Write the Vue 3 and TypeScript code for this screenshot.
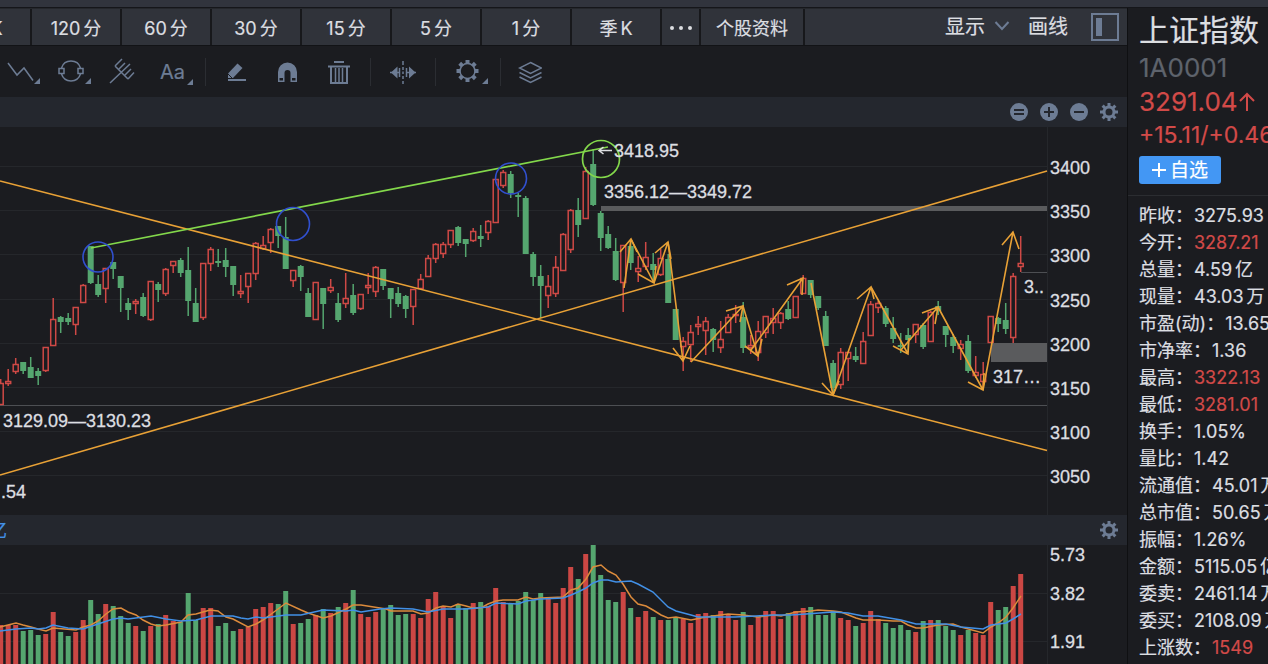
<script setup lang="ts">
type Candle = { x: number; up: boolean; high: number; top: number; bottom: number; low: number; volume: number }
type Quote = { label: string; value: string; unit?: string; up?: boolean }

const periods: [string, string][] = [
  ['月', 'K'], ['120', '分'], ['60', '分'], ['30', '分'], ['15', '分'], ['5', '分'], ['1', '分'], ['季', 'K'],
]

const quotes: Quote[] = [
  { label: '昨收', value: '3275.93' },
  { label: '今开', value: '3287.21', up: true },
  { label: '总量', value: '4.59', unit: '亿' },
  { label: '现量', value: '43.03', unit: '万' },
  { label: '市盈(动)', value: '13.65' },
  { label: '市净率', value: '1.36' },
  { label: '最高', value: '3322.13', up: true },
  { label: '最低', value: '3281.01', up: true },
  { label: '换手', value: '1.05%' },
  { label: '量比', value: '1.42' },
  { label: '流通值', value: '45.01', unit: '万亿' },
  { label: '总市值', value: '50.65', unit: '万亿' },
  { label: '振幅', value: '1.26%' },
  { label: '金额', value: '5115.05', unit: '亿' },
  { label: '委卖', value: '2461.14', unit: '万' },
  { label: '委买', value: '2108.09', unit: '万' },
  { label: '上涨数', value: '1549', up: true },
]

// direction, high, body top, body bottom, low
const series = `
r 379 383 404 405|r 369 381 383 386|r 358 364 371 374|g 362 362 371 374|g 357 367 378 378|g 368 371 376 385
r 347 347 370 372|r 298 319 345 345|g 316 317 322 333|g 313 318 322 325|r 307 307 324 335|r 284 285 302 302
g 246 246 283 284|g 275 284 295 297|r 268 268 288 303|g 262 262 269 279|g 276 276 288 312|g 298 303 310 320
r 299 301 303 314|g 293 297 316 317|r 281 281 319 321|g 282 284 290 302|r 268 269 293 296|r 261 261 265 273
g 258 260 273 277|g 247 270 301 316|g 288 303 322 322|r 263 263 317 320|r 247 249 263 271|g 249 261 263 267
g 248 260 267 277|g 266 266 285 296|r 275 291 293 298|r 273 273 286 303|r 242 243 273 280|r 236 245 248 250
r 228 229 242 253|g 226 226 236 248|g 217 237 269 269|r 270 270 280 287|g 265 266 277 291|g 288 293 317 317
r 282 282 319 319|g 288 288 304 329|r 279 287 290 293|g 293 303 320 322|r 273 298 303 308|g 284 295 313 315
r 294 294 308 310|r 273 285 287 294|r 266 267 291 297|g 269 269 286 290|g 288 288 299 318|g 287 293 304 307
g 295 296 309 318|r 289 289 306 325|r 274 279 288 289|r 255 258 276 276|r 243 244 258 263|r 242 244 253 258
r 230 230 244 248|g 226 227 243 246|g 239 239 244 257|r 228 231 240 242|g 225 236 239 247|r 220 221 232 240
r 179 179 222 223|r 170 172 185 188|g 171 174 193 198|g 193 195 197 217|g 196 198 254 254|g 252 254 277 286
g 265 276 286 318|r 275 286 295 308|r 256 267 293 297|r 233 234 270 271|r 209 210 249 253|g 198 210 225 237
r 167 171 218 219|g 149 164 205 206|g 211 213 238 251|g 226 234 248 249|g 238 251 280 281|r 245 245 282 312
g 240 246 263 270|r 256 268 271 282|r 242 257 266 270|g 253 264 270 283|r 249 258 274 276|g 254 259 303 303
g 309 309 340 340|r 337 341 346 371|r 325 332 344 362|r 316 324 326 335|r 317 321 330 355|g 328 329 340 352
r 321 339 347 353|r 314 317 332 333|r 305 314 315 323|g 302 317 348 353|r 335 345 347 354|r 321 331 352 361
r 316 316 332 338|r 308 318 322 334|r 312 313 322 329|g 301 309 319 320|r 296 296 317 317|r 275 278 293 294
g 280 280 295 298|g 296 296 308 310|g 311 316 346 346|g 360 363 388 395|r 348 352 384 389|r 352 352 358 381
g 347 356 360 362|r 332 341 363 363|r 301 304 335 336|r 301 303 307 313|g 306 308 324 327|g 317 328 339 343
g 333 345 347 353|g 328 335 340 352|r 324 324 334 343|g 323 325 347 349|r 311 312 341 341|g 301 306 311 315
g 326 326 335 347|g 334 337 346 353|r 340 344 348 360|g 335 341 371 373|r 356 372 375 378|r 362 374 381 388
r 316 316 342 343|g 317 318 324 332|g 303 320 329 334|r 273 276 337 343|r 236 263 266 272`

const volumes = [
  625, 625, 625, 631, 630, 635, 634, 612, 632, 636, 632, 620, 600, 614, 604, 606, 616, 623, 626, 631,
  626, 624, 615, 621, 622, 593, 620, 608, 608, 626, 623, 631, 629, 627, 609, 607, 603, 604, 591, 624,
  623, 619, 615, 609, 613, 607, 603, 590, 614, 617, 612, 608, 605, 615, 614, 614, 618, 599, 592, 607,
  618, 604, 608, 603, 602, 606, 588, 602, 603, 601, 592, 600, 593, 599, 603, 588, 567, 579, 554, 545,
  575, 600, 602, 592, 608, 617, 611, 617, 620, 620, 617, 619, 623, 614, 613, 615, 611, 615, 620, 612,
  625, 617, 611, 611, 619, 613, 611, 608, 607, 615, 615, 611, 618, 620, 626, 623, 611, 619, 623, 628,
  625, 630, 632, 621, 620, 620, 626, 630, 635, 630, 633, 635, 602, 610, 607, 586, 574,
]

const candles: Candle[] = series.trim().split(/[|\n]/).map((row, i) => {
  const [dir, high, top, bottom, low] = row.split(' ')
  return { x: 0.7 + i * 7.5, up: dir === 'r', high: +high, top: +top, bottom: +bottom, low: +low, volume: volumes[i] }
})

const prices = [3400, 3350, 3300, 3250, 3200, 3150, 3100, 3050].map((price, i) => ({ price, y: Math.round(167 + i * 44.2) }))

// start, tip, and the two barbs of each arrow
const arrows = [
  [624, 288, 631, 239, 620, 252, 637, 252],
  [631, 239, 654, 283, 638, 274, 656, 266],
  [654, 283, 668, 242, 655, 253, 671, 259],
  [668, 242, 683, 361, 673, 348, 690, 346],
  [691, 362, 743, 306, 726, 311, 740, 322],
  [743, 306, 758, 356, 745, 346, 762, 339],
  [751, 350, 803, 278, 787, 285, 802, 295],
  [811, 283, 833, 395, 822, 383, 839, 381],
  [833, 395, 871, 287, 857, 299, 874, 299],
  [871, 287, 908, 354, 893, 346, 909, 338],
  [901, 350, 938, 307, 922, 313, 935, 324],
  [938, 307, 983, 390, 968, 382, 984, 373],
  [983, 390, 1013, 232, 1002, 245, 1019, 249],
]
const arrowPath = (a: number[]) => `M${a[0]} ${a[1]}L${a[2]} ${a[3]}M${a[4]} ${a[5]}L${a[2]} ${a[3]}L${a[6]} ${a[7]}`

const maShort = '0,627 8,625 16,623 23,625 31,627 38,629 46,631 53,628 76,630 83,627 91,625 98,621 106,614 113,609 121,608 128,612 136,615 143,620 151,624 158,626 166,625 181,622 188,615 196,614 203,612 210,610 218,611 226,617 233,619 248,627 256,624 263,620 278,609 286,603 301,610 308,613 323,618 331,616 346,609 353,605 361,605 380,608 386,609 391,611 413,611 421,614 428,613 436,608 443,606 451,607 458,604 466,606 473,608 481,608 488,604 496,601 503,600 518,600 526,597 533,599 541,598 563,597 571,590 578,588 586,579 593,567 601,565 608,571 616,575 623,584 631,597 638,604 646,606 653,610 661,615 668,618 676,617 691,620 706,617 728,614 743,615 758,617 773,615 781,616 796,612 811,611 818,610 833,611 841,612 856,618 863,620 878,620 893,621 901,621 908,625 916,628 923,628 938,625 953,624 961,627 983,633 991,627 998,623 1006,617 1013,608 1021,596'
const maLong = '0,631 16,629 31,628 38,629 46,628 53,625 68,628 83,629 98,624 113,619 121,618 128,619 151,616 166,619 181,621 196,620 211,616 233,616 241,618 248,619 256,617 263,618 286,615 301,615 323,610 346,611 353,610 361,612 380,609 391,608 413,609 428,612 443,609 466,609 488,607 496,603 518,604 526,601 541,599 563,598 571,595 578,592 586,588 593,583 601,580 608,580 616,582 631,581 638,584 653,592 668,607 676,611 691,615 698,617 735,617 756,616 773,615 791,615 806,614 833,612 848,613 863,616 878,616 901,620 916,624 946,624 961,627 983,629 991,625 1006,623 1013,619 1021,614'

const teeth = [0, 45, 90, 135, 180, 225, 270, 315]
</script>

<template>
  <div class="app">
    <div class="strip"></div>
    <div class="body">
      <main class="main">
        <nav class="tabs">
          <button v-for="[a, b] in periods" :key="a + b" class="tab"><span>{{ a }}</span><span>{{ b }}</span></button>
          <button class="tab more" aria-label="更多周期"><i></i><i></i><i></i></button>
          <button class="tab info">个股资料</button>
          <div class="tab-tools">
            <button class="plain show">显示
              <svg width="16" height="12" viewBox="0 0 16 12"><path d="M1.500 1L8 8L14.500 1" fill="none" stroke="#6d7c94" stroke-width="2" /></svg>
            </button>
            <button class="plain">画线</button>
            <button class="plain layout" aria-label="侧栏">
              <svg width="28" height="28" viewBox="0 0 28 28"><rect x="1" y="1" width="26" height="26" fill="none" stroke="#6d7c94" stroke-width="2" /><rect x="5" y="5" width="6" height="18" fill="#6d7c94" /></svg>
            </button>
          </div>
        </nav>

        <div class="toolbar">
          <div class="group first">
            <button class="plain" aria-label="折线">
              <svg width="34" height="28" viewBox="7 59 34 28"><path class="ln" d="M8 64L17 76L24 69L33 81.500" /><path class="fl" d="M40 79V85H34Z" /></svg>
            </button>
            <button class="plain" aria-label="圆形">
              <svg width="34" height="28" viewBox="58 59 34 28"><path class="ln" d="M61.500 69A10 10 0 0 1 80.500 69M61.500 75A10 10 0 0 0 80.500 75M59 69.500H64V74.500H59ZM78 69.500H83V74.500H78Z" /><path class="fl" d="M91 79V85H85Z" /></svg>
            </button>
            <button class="plain" aria-label="叉线">
              <svg width="34" height="28" viewBox="109 59 34 28"><path class="ln" d="M110 84L130 65M115 67L128 80M115 67L122 60M118.500 70.500L125 64M124.500 76.500L131 70M128 80L134 73.500" /></svg>
            </button>
            <button class="plain text-tool" aria-label="文字">Aa
              <svg width="7" height="7" viewBox="0 0 7 7"><path class="fl" d="M6 0V6H0Z" /></svg>
            </button>
          </div>
          <div class="group edit">
            <button class="plain" aria-label="画笔">
              <svg width="24" height="28" viewBox="225 59 24 28"><path class="fl" d="M237.500 64.500L242.500 69L233 79H228V74.500Z" /><path d="M228 75L232 79" stroke="#1b1c20" /><path class="ln thick" d="M228 81H246" /></svg>
            </button>
            <button class="plain" aria-label="磁铁">
              <svg width="24" height="28" viewBox="276 59 24 28"><path class="fl" d="M278 83V73A9.500 9.500 0 0 1 297 73V83H290.500V74A3 3 0 0 0 284.500 74V83Z" /><path d="M279.500 79H283V81.500H279.500ZM292 79H295.500V81.500H292Z" fill="#1b1c20" /></svg>
            </button>
            <button class="plain" aria-label="删除">
              <svg width="24" height="28" viewBox="327 59 24 28"><path class="ln thick" d="M334 63H344M328 67.500H350M331 68V84H347V68" /><path class="ln" d="M335.500 69V83M339 69V83M342.500 69V83" /></svg>
            </button>
          </div>
          <div class="group">
            <button class="plain" aria-label="镜像">
              <svg width="26" height="28" viewBox="390 59 26 28"><path class="ln" d="M403 62V66M403 68V71M403 72.500V75M403 77V80M403 82V85M399.500 69V78M406.500 69V78M390 73.500H400M406 73.500H416" /><path class="fl" d="M391 73.500L397.500 67.500V79.500ZM415.500 73.500L409 67.500V79.500Z" /></svg>
            </button>
          </div>
          <div class="group settings">
            <button class="plain" aria-label="设置">
              <svg width="34" height="28" viewBox="455 59 34 28"><circle class="ln" cx="467.500" cy="72" r="7.500" stroke-width="2" /><rect v-for="t in teeth" :key="t" class="fl" x="465.500" y="61" width="4" height="4" :transform="`rotate(${t} 467.500 72)`" /><path class="fl" d="M488 79V85H482Z" /></svg>
            </button>
          </div>
          <div class="group last">
            <button class="plain" aria-label="图层">
              <svg width="24" height="28" viewBox="518 59 24 28"><path class="ln" d="M530.500 63.500L541.500 69L530.500 74.500L519.500 69ZM519.500 73.500L530.500 79L541.500 73.500M519.500 78L530.500 83.500L541.500 78" /></svg>
            </button>
          </div>
        </div>

        <div class="bar">
          <button class="plain" aria-label="还原"><svg width="18" height="18" viewBox="0 0 18 18"><circle class="fl" cx="9" cy="9" r="9" /><path class="cut" d="M4 7H14M4 11H14" /></svg></button>
          <button class="plain" aria-label="放大"><svg width="18" height="18" viewBox="0 0 18 18"><circle class="fl" cx="9" cy="9" r="9" /><path class="cut" d="M4 9H14M9 4V14" /></svg></button>
          <button class="plain" aria-label="缩小"><svg width="18" height="18" viewBox="0 0 18 18"><circle class="fl" cx="9" cy="9" r="9" /><path class="cut" d="M4 9H14" /></svg></button>
          <button class="plain" aria-label="指标设置"><svg width="18" height="18" viewBox="0 0 18 18"><circle cx="9" cy="9" r="5" fill="none" stroke="#6d7c94" stroke-width="3" /><rect v-for="t in teeth" :key="t" class="fl" x="7.500" y="0" width="3" height="4" :transform="`rotate(${t} 9 9)`" /></svg></button>
        </div>

        <svg class="chart" viewBox="0 127 1127 388" preserveAspectRatio="xMaxYMin meet">
          <path v-for="p in prices" :key="p.price" class="grid" :d="`M0 ${p.y - 0.5}H1047`" />
          <path class="grid" d="M1047.500 127V515" />
          <path d="M0 405.500H1047" stroke="#4d4f53" />
          <path d="M1021 272.500H1047" stroke="#4d4f53" />
          <g v-for="c in candles" :key="c.x" :class="c.up ? 'up' : 'down'">
            <template v-if="c.up">
              <path :d="`M${c.x} ${c.high}V${c.top}M${c.x} ${c.bottom}V${c.low}`" />
              <rect :x="c.x - 2.5" :y="c.top + 0.5" width="5" :height="Math.max(1, c.bottom - c.top)" />
            </template>
            <template v-else>
              <path :d="`M${c.x} ${c.high}V${c.low}`" />
              <rect :x="c.x - 3" :y="c.top" width="6" :height="Math.max(2, c.bottom - c.top)" />
            </template>
          </g>
          <rect x="601" y="206" width="446" height="5" fill="#5a5b5d" />
          <rect x="991" y="343" width="56" height="19" fill="#5a5b5d" />
          <g class="trend">
            <path d="M0 181L1047 450.500M0 475L1047 171" />
            <path v-for="(a, i) in arrows" :key="i" :d="arrowPath(a)" />
          </g>
          <path d="M91 248L608 147" class="green" />
          <circle class="green" cx="601" cy="159" r="18.500" />
          <g class="blue">
            <circle cx="98" cy="257" r="15" />
            <circle cx="293" cy="224" r="16.500" />
            <circle cx="511" cy="178.500" r="15.500" />
          </g>
          <path d="M599 150.500H612M603.500 147L599 150.500L603.500 154" fill="none" stroke="#dcdee1" stroke-width="1.500" />
          <g class="labels">
            <text x="614" y="157">3418.95</text>
            <text x="604" y="198">3356.12—3349.72</text>
            <text x="3" y="427">3129.09—3130.23</text>
            <text x="1" y="498">.54</text>
            <text x="1024" y="293">3..</text>
            <text x="993" y="383">317…</text>
            <text v-for="p in prices" :key="p.price" x="1050" :y="p.y + 7">{{ p.price }}</text>
          </g>
        </svg>

        <div class="bar volume-bar">
          <span class="unit">亿</span>
          <button class="plain" aria-label="成交量设置"><svg width="18" height="18" viewBox="0 0 18 18"><circle cx="9" cy="9" r="5" fill="none" stroke="#6d7c94" stroke-width="3" /><rect v-for="t in teeth" :key="t" class="fl" x="7.500" y="0" width="3" height="4" :transform="`rotate(${t} 9 9)`" /></svg></button>
        </div>

        <svg class="chart" viewBox="0 545 1127 119" preserveAspectRatio="xMaxYMin meet">
          <path class="grid" d="M0 593.500H1047M0 641.500H1047M1047.500 545V664" />
          <rect v-for="c in candles" :key="c.x" :x="c.x - 2.5" :y="c.volume" width="5" :height="664 - c.volume" :fill="c.up ? '#cb4744' : '#55a66f'" />
          <polyline :points="maShort" fill="none" stroke="#dc8b3c" stroke-width="1.500" />
          <polyline :points="maLong" fill="none" stroke="#4290e6" stroke-width="1.500" />
          <g class="labels">
            <text x="1050" y="561">5.73</text>
            <text x="1050" y="600">3.82</text>
            <text x="1050" y="648">1.91</text>
          </g>
        </svg>
      </main>

      <aside class="side">
        <header class="head">
          <h1>上证指数</h1>
          <div class="code">1A0001</div>
          <div class="price">3291.04<svg width="18" height="20" viewBox="0 0 18 20"><path d="M9 19V2M2 9L9 2L16 9" fill="none" stroke="#d24a48" stroke-width="2" /></svg></div>
          <div class="change">+15.11/+0.46%</div>
          <button class="add"><svg width="14" height="14" viewBox="0 0 14 14"><path d="M0 7H14M7 0V14" stroke="#fff" stroke-width="2" /></svg>自选</button>
        </header>
        <dl class="quotes">
          <div v-for="q in quotes" :key="q.label" class="row">
            <dt>{{ q.label }}：</dt>
            <dd :class="{ rise: q.up }">{{ q.value }}<span v-if="q.unit" class="suffix">{{ q.unit }}</span></dd>
          </div>
        </dl>
      </aside>
    </div>
  </div>
</template>

<style>
body { margin: 0; background: #1b1c20; overflow: hidden; }
</style>

<style scoped>
.app { height: 100vh; overflow: hidden; display: flex; flex-direction: column; background: #1b1c20; color: #dcdee1; font: 18px/27px Inter, "Noto Sans CJK SC", sans-serif; -webkit-text-stroke: 0.200px; }
.strip { height: 7px; flex: none; background: #31343d; border-bottom: 1px solid #15161a; }
.body { flex: 1; min-height: 0; display: flex; }
.main { flex: 1; min-width: 0; display: flex; flex-direction: column; }
button { font: inherit; color: inherit; border: 0; padding: 0; margin: 0; background: none; cursor: pointer; }
svg { display: block; flex: none; }
.plain { display: flex; align-items: center; }

.tabs { display: flex; height: 36px; flex: none; overflow: hidden; background: #30333a; border-bottom: 1px solid #121316; border-top: 1px solid #25272c; }
.tab { box-sizing: border-box; flex: none; width: 90px; padding-top: 2px; display: flex; align-items: center; justify-content: center; gap: 3px; border-right: 2px solid #17181b; }
.tab:first-child { margin-left: -58px; }
.more { width: 39px; gap: 5px; }
.more i { width: 4px; height: 4px; border-radius: 2px; background: #dcdee1; }
.info { width: 104px; }
.tab-tools { flex: 1; display: flex; align-items: center; justify-content: flex-end; padding-right: 8px; font-size: 20px; }
.show { gap: 9px; margin-right: 18px; }
.layout { margin-left: 23px; }

.toolbar { display: flex; align-items: center; height: 51px; flex: none; }
.group { display: flex; align-items: center; padding: 0 19px; border-right: 1px solid #2b2d32; height: 28px; }
.first { padding: 0 11px 0 7px; gap: 17px; }
.edit { gap: 27px; }
.settings { padding-right: 11px; }
.last { padding-left: 17px; border-right: 0; }
.text-tool { width: 34px; justify-content: space-between; align-items: flex-end; color: #6d7c94; font-size: 20px; line-height: 28px; }
.ln { fill: none; stroke: #6d7c94; stroke-width: 1.500; }
.thick { stroke-width: 2; }
.fl { fill: #6d7c94; }
.cut { stroke: #24272e; stroke-width: 2; }

.bar { display: flex; align-items: center; justify-content: flex-end; gap: 12px; height: 30px; flex: none; padding-right: 9px; background: #24272e; overflow: hidden; }
.volume-bar { justify-content: space-between; }
.unit { margin-left: -11px; color: #4290e6; }
.chart { width: 100%; height: auto; }
.grid { stroke: #25272b; fill: none; }
.up path { stroke: #cf4946; stroke-width: 1.500; }
.up rect { stroke: #cf4946; stroke-width: 1.500; fill: #1b1c20; }
.down path { stroke: #55a66f; stroke-width: 1.500; }
.down rect { fill: #55a66f; }
.trend { fill: none; stroke: #e8a136; stroke-width: 1.600; }
.green { fill: none; stroke: #83d84b; stroke-width: 1.700; }
.blue { fill: none; stroke: #3150cf; stroke-width: 1.600; }
.labels { fill: #dcdee1; stroke: #dcdee1; stroke-width: 0.300; font: 18px "Liberation Sans", sans-serif; -webkit-text-stroke: 0; }

.side { width: 140px; flex: none; overflow: hidden; border-left: 1px solid #0f1012; white-space: nowrap; }
.head { height: 188px; box-sizing: border-box; padding: 1px 0 0 11px; border-bottom: 1px solid #2b2d31; }
h1 { margin: 0; font-size: 30px; line-height: 42px; font-weight: 400; }
.code { font-size: 26px; line-height: 34px; color: #5e636c; }
.price { display: flex; align-items: center; font-size: 26px; line-height: 34px; color: #d24a48; }
.change { font-size: 23px; line-height: 32px; color: #d24a48; }
.add { display: flex; align-items: center; justify-content: center; gap: 4px; width: 82px; height: 28px; margin-top: 5px; border-radius: 3px; background: #4397f4; color: #fff; font-size: 19px; }
.quotes { margin: 0; padding: 6px 0 0 11px; }
.row { display: flex; height: 27px; }
dd { margin: 0 0 0 1px; }
.rise { color: #d24a48; }
.suffix { margin-left: 3px; }
</style>
